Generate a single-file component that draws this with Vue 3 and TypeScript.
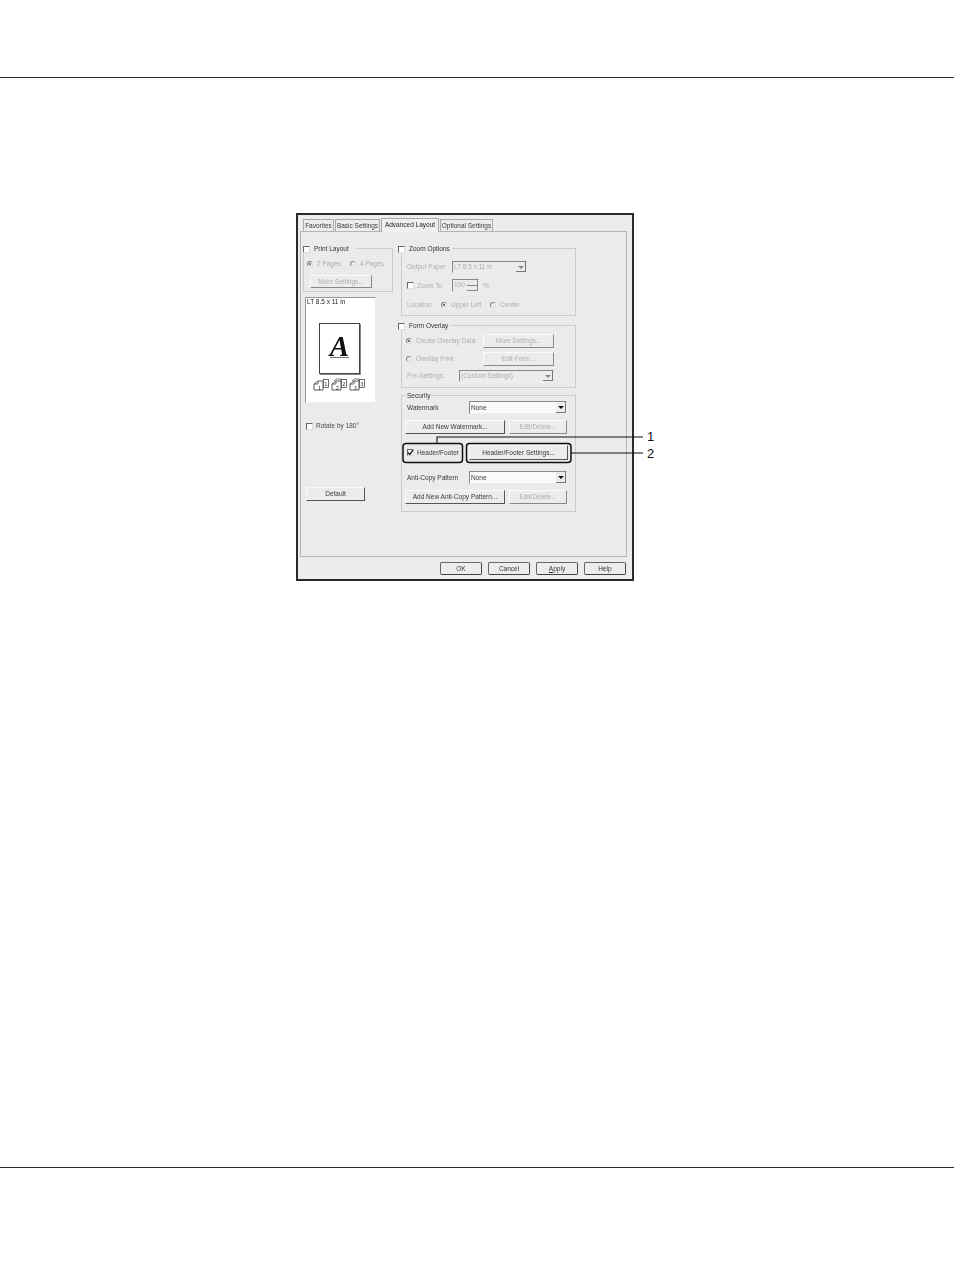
<script setup lang="ts">
const tabs: { label: string; width: number; active?: boolean }[] = [
  { label: 'Favorites', width: 31 },
  { label: 'Basic Settings', width: 45 },
  { label: 'Advanced Layout', width: 58, active: true },
  { label: 'Optional Settings', width: 53 },
]
const footerButtons = ['OK', 'Cancel', 'Help']
const pageIcons = [1, 2, 3]
</script>

<template>
  <div class="page">
    <div class="rule top"></div>
    <div class="dialog">
      <div class="tabs">
        <div v-for="t in tabs" :key="t.label" class="tab" :class="{ active: t.active }" :style="{ width: t.width + 'px' }">{{ t.label }}</div>
      </div>
      <div class="panel">
        <div class="col left">
          <div class="group layout">
            <div class="legend pl"><span class="check"></span><span>Print Layout</span></div>
            <div class="row pages off">
              <span class="radio on"></span><span class="w33">2 Pages</span>
              <span class="radio"></span><span>4 Pages</span>
            </div>
            <button class="btn off more">More Settings...</button>
          </div>
          <div class="preview">
            <div class="preview-label">LT 8.5 x 11 in</div>
            <div class="sheet"><span class="big-a">A</span></div>
            <div class="icons">
              <svg v-for="n in pageIcons" :key="n" width="17" height="13" viewBox="0 0 17 13">
                <path v-if="n > 1" d="M3 3l2-2h5M10 1v3" fill="none" stroke="#444" stroke-width=".7" />
                <path d="M1 12V6l4-3h5v9z" fill="#fff" stroke="#333" stroke-width=".8" />
                <path d="M1 6h4V3" fill="none" stroke="#333" stroke-width=".7" />
                <rect x="10.500" y="1.500" width="5" height="8" fill="#fff" stroke="#333" stroke-width=".7" />
                <text x="11.600" y="8" class="icon-num">{{ n }}</text>
                <text x="5" y="11.500" class="icon-num">{{ n }}</text>
              </svg>
            </div>
          </div>
          <div class="row rotate"><span class="check"></span><span>Rotate by 180°</span></div>
          <button class="btn default">Default</button>
        </div>

        <div class="col right">
          <div class="group zoom">
            <div class="legend rt"><span class="check"></span><span>Zoom Options</span></div>
            <div class="row off">
              <span class="lab w45">Output Paper</span>
              <span class="select w75 h12">LT 8.5 x 11 in<i class="arrow"></i></span>
            </div>
            <div class="row off r2">
              <span class="w45 row"><span class="check"></span><span>Zoom To</span></span>
              <span class="spin">100<i class="spin-btns"><b></b><b></b></i></span>
              <span class="pct">%</span>
            </div>
            <div class="row off r3">
              <span class="w34">Location</span>
              <span class="radio on"></span><span class="w39">Upper Left</span>
              <span class="radio"></span><span>Center</span>
            </div>
          </div>

          <div class="group form">
            <div class="legend rt"><span class="check"></span><span>Form Overlay</span></div>
            <div class="row off radio-row">
              <span class="w76 row"><span class="radio on"></span><span>Create Overlay Data</span></span>
              <button class="btn off w71">More Settings...</button>
            </div>
            <div class="row off radio-row mt4">
              <span class="w76 row"><span class="radio"></span><span>Overlay Print</span></span>
              <button class="btn off w71">Edit Form...</button>
            </div>
            <div class="row off mt4">
              <span class="w52">Pre-Settings:</span>
              <span class="select w95 h12">(Custom Settings)<i class="arrow"></i></span>
            </div>
          </div>

          <div class="group security">
            <div class="legend plain"><span>Security</span></div>
            <div class="row">
              <span class="w62">Watermark</span>
              <span class="select w98 h13">None<i class="arrow dark"></i></span>
            </div>
            <div class="row btns">
              <button class="btn w100">Add New Watermark...</button>
              <button class="btn off w58">Edit/Delete...</button>
            </div>
            <div class="row hf">
              <span class="w62 row"><span class="check"><svg width="7" height="7" viewBox="0 0 7 7"><path d="M1 3.500l1.800 2L6 1.200" fill="none" stroke="#111" stroke-width="1.300" /></svg></span><span>Header/Footer</span></span>
              <button class="btn w99">Header/Footer Settings...</button>
            </div>
            <div class="row hf">
              <span class="w62">Anti-Copy Pattern</span>
              <span class="select w98 h13">None<i class="arrow dark"></i></span>
            </div>
            <div class="row btns">
              <button class="btn w100">Add New Anti-Copy Pattern...</button>
              <button class="btn off w58">Edit/Delete...</button>
            </div>
          </div>
        </div>
      </div>
      <div class="footer">
        <button class="btn foot">{{ footerButtons[0] }}</button>
        <button class="btn foot">{{ footerButtons[1] }}</button>
        <button class="btn foot"><u>A</u>pply</button>
        <button class="btn foot">{{ footerButtons[2] }}</button>
      </div>
    </div>
    <div class="rule bottom"></div>

    <svg class="callouts" width="954" height="1273" viewBox="0 0 954 1273">
      <rect x="403" y="443.500" width="59.500" height="19" rx="3" fill="none" stroke="#111" stroke-width="1.500" />
      <rect x="466.500" y="443.500" width="104.500" height="19" rx="3" fill="none" stroke="#111" stroke-width="1.500" />
      <path d="M437 443V437H643" fill="none" stroke="#111" stroke-width="1.100" />
      <path d="M571 453H643" fill="none" stroke="#111" stroke-width="1.100" />
      <text x="647" y="441" class="num">1</text>
      <text x="647" y="458" class="num">2</text>
    </svg>
  </div>
</template>

<style>
body { margin: 0; background: #fff; }
</style>

<style scoped>
.page {
  position: relative;
  width: 954px;
  height: 1273px;
  overflow: hidden;
  background: #fff;
  font-family: "Liberation Sans", Arial, sans-serif;
  display: flex;
  flex-direction: column;
}
.rule { height: 1px; background: #2c2c2c; flex: none; }
.rule.top { margin-top: 77px; }
.rule.bottom { margin-top: 586px; }

.dialog {
  flex: none;
  box-sizing: border-box;
  width: 338px;
  height: 368px;
  margin: 135px 0 0 296px;
  padding: 4px 4px 0 2px;
  border: 2px solid #2a2a2a;
  background: #ececec;
  color: #3a3a3a;
  font-size: 6.500px;
  line-height: 10px;
  filter: blur(0.4px);
}
.tabs { display: flex; height: 12px; padding-left: 3px; align-items: flex-end; }
.tab {
  box-sizing: border-box;
  height: 12px;
  padding-top: 1px;
  margin-right: 1px;
  border: 1px solid #aaa;
  border-bottom: 0;
  border-radius: 1px 1px 0 0;
  background: #ededed;
  white-space: nowrap;
  text-align: center;
}
.tab.active {
  position: relative;
  height: 14px;
  margin: 0 1px -1px 0;
  background: #f0f0f0;
  z-index: 1;
  color: #222;
}
.panel {
  box-sizing: border-box;
  display: flex;
  gap: 8px;
  width: 327px;
  height: 326px;
  padding: 16px 0 0 2px;
  border: 1px solid #b4b4b4;
  background: #ebebeb;
}
.col { display: flex; flex-direction: column; align-items: flex-start; flex: none; }
.col.left { width: 90px; }
.col.right { width: 175px; }

.group {
  position: relative;
  box-sizing: border-box;
  width: 100%;
  border: 1px solid #cbcbcb;
}
.legend {
  position: absolute;
  top: -5px;
  display: flex;
  align-items: center;
  height: 10px;
  background: #ebebeb;
  color: #333;
  white-space: nowrap;
}
.legend.pl { left: -1px; padding-right: 8px; }
.legend.rt { left: -4px; padding-right: 2px; }
.legend.plain { left: 4px; padding: 0 1px; }
.legend .check { margin-right: 4px; }

.row { display: flex; align-items: center; white-space: nowrap; }
.off { color: #aeaeae; }

.check {
  box-sizing: border-box;
  display: inline-flex;
  flex: none;
  width: 7px;
  height: 7px;
  margin-right: 3px;
  background: #fff;
  border: 1px solid;
  border-color: #666 #ddd #ddd #666;
}
.check svg { margin: -1px; }
.radio {
  box-sizing: border-box;
  flex: none;
  width: 6px;
  height: 6px;
  margin-right: 4px;
  border-radius: 50%;
  border: 1px solid;
  border-color: #888 #ddd #ddd #888;
  background: #eee;
}
.radio.on { background: radial-gradient(circle, #777 35%, #eee 45%); }

.btn {
  box-sizing: border-box;
  flex: none;
  height: 14px;
  padding: 0;
  font: inherit;
  line-height: 10px;
  color: #3a3a3a;
  background: #ececec;
  border: 1px solid;
  border-color: #fafafa #555 #555 #fafafa;
  white-space: nowrap;
  text-align: center;
}
.btn.off { color: #aeaeae; border-color: #fafafa #888 #888 #fafafa; }

.select {
  position: relative;
  box-sizing: border-box;
  flex: none;
  display: block;
  padding-left: 1px;
  border: 1px solid;
  border-color: #888 #eee #eee #888;
  background: #fafafa;
  line-height: 10px;
}
.off .select { background: #ececec; }
.h12 { height: 12px; }
.h13 { height: 13px; line-height: 11px; }
.arrow {
  position: absolute;
  top: 0;
  right: 0;
  bottom: 0;
  width: 10px;
  background: #ececec;
  box-shadow: inset -1px -1px 0 #777;
}
.arrow::after {
  content: "";
  position: absolute;
  left: 2px;
  top: 4px;
  border: 3px solid transparent;
  border-top-color: #888;
  border-bottom: 0;
}
.arrow.dark::after { border-top-color: #111; }

.w33 { width: 33px; }
.w34 { width: 34px; flex: none; }
.w39 { width: 39px; flex: none; }
.w45 { width: 45px; flex: none; }
.w52 { width: 52px; flex: none; }
.w58 { width: 58px; }
.w62 { width: 62px; flex: none; }
.w71 { width: 71px; }
.w75 { width: 75px; }
.w76 { width: 77px; flex: none; }
.w95 { width: 95px; }
.w98 { width: 98px; }
.w99 { width: 99px; height: 15px; }
.w100 { width: 100px; }
.mt4 { margin-top: 4px; }

/* left column */
.layout { height: 44px; }
.pages { margin: 10px 0 0 3px; }
.more { display: block; width: 62px; height: 13px; margin: 6px 0 0 6px; }
.preview {
  box-sizing: border-box;
  position: relative;
  width: 71px;
  height: 106px;
  margin: 5px 0 0 2px;
  padding: 0 0 0 1px;
  background: #fff;
  border: 1px solid;
  border-color: #999 #eee #eee #999;
  line-height: 7px;
  color: #222;
}
.sheet {
  box-sizing: border-box;
  display: flex;
  justify-content: center;
  width: 41px;
  height: 51px;
  margin: 18px 0 0 12px;
  padding-top: 12px;
  background: #fff;
  border: 1px solid #444;
  box-shadow: 1px 1px 0 #888;
}
.big-a {
  height: 21px;
  font-family: "Liberation Serif", "Times New Roman", serif;
  font-style: italic;
  font-weight: 700;
  font-size: 29px;
  line-height: 21px;
  color: #111;
  border-bottom: 1px solid #777;
}
.icons { display: flex; gap: 1px; margin: 4px 0 0 6px; }
.icon-num { font-size: 5px; font-family: "Liberation Sans", Arial, sans-serif; fill: #222; }
.rotate { margin: 18px 0 0 3px; color: #4a4a4a; }
.default { width: 59px; margin: 56px 0 0 3px; }

/* right column */
.zoom { height: 68px; padding: 12px 0 0 5px; margin-bottom: 9px; }
.r2 { margin-top: 6px; }
.r3 { margin-top: 8px; }
.spin {
  position: relative;
  box-sizing: border-box;
  width: 27px;
  height: 13px;
  padding-left: 1px;
  border: 1px solid;
  border-color: #888 #eee #eee #888;
  line-height: 10px;
}
.spin-btns {
  position: absolute;
  top: 0;
  right: 0;
  bottom: 0;
  width: 11px;
  display: flex;
  flex-direction: column;
}
.spin-btns b { flex: 1; border-bottom: 1px solid #888; border-right: 1px solid #888; }
.pct { margin-left: 4px; }
.form { height: 63px; padding: 8px 0 0 5px; margin-bottom: 7px; }
.radio-row { margin-left: -1px; }
.security { height: 117px; padding: 5px 0 0 5px; }
.btns { gap: 4px; margin: 6px 0 0 -2px; }
.hf { margin-top: 11px; }

/* footer */
.footer {
  display: flex;
  justify-content: flex-end;
  gap: 6px;
  width: 326px;
  margin-top: 5px;
}
.foot {
  width: 42px;
  height: 13px;
  border-radius: 2px;
  border-color: #666 #444 #444 #666;
}

.callouts { position: absolute; inset: 0; pointer-events: none; }
.num { font-size: 13px; fill: #111; font-family: "Liberation Sans", Arial, sans-serif; }
</style>
